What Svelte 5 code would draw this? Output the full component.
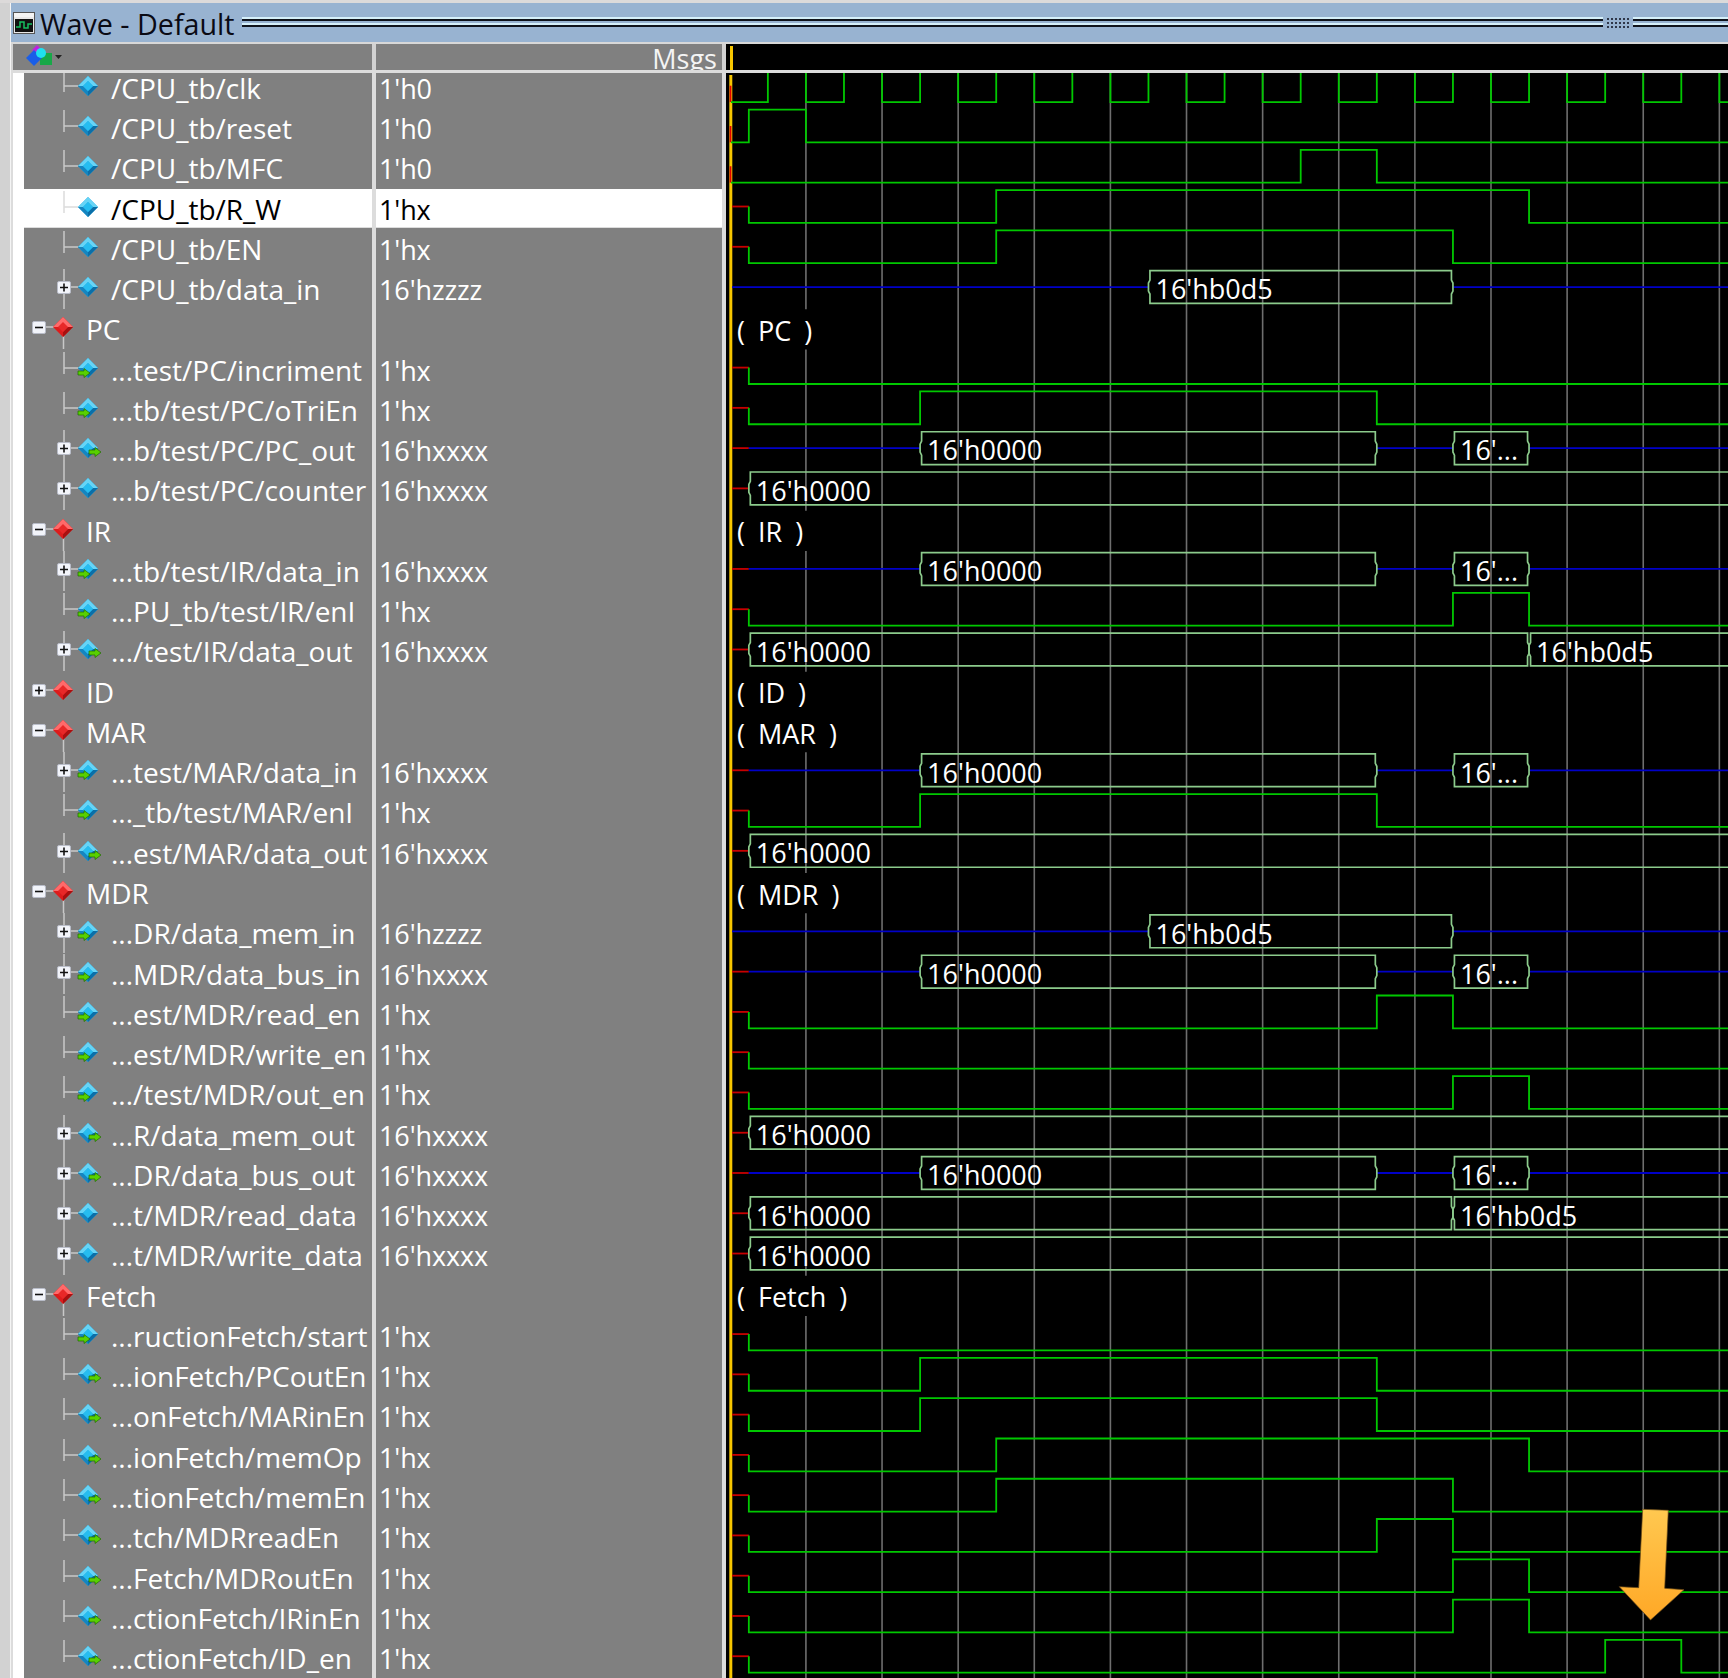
<script>
  // geometry of the wave view, in page pixels
  const rowTop = 67.7;
  const rowH = 40.27;
  const x = (t) => 729.8 + 38.06 * t;
  const END = 27;

  const top = (i) => rowTop + rowH * i;
  const hi = (i) => top(i) + 1.6;
  const lo = (i) => top(i) + 34.4;
  const mid = (i) => top(i) + 18;

  const bit = (value, ...edges) => ({ value, wave: 'bit', edges, known: value === "1'h0" });
  const val = (segs, z = false) => ({ value: z ? "16'hzzzz" : "16'hxxxx", wave: 'bus', segs, z });
  const group = (name, open = true) => ({ name, group: true, open, wave: 'group' });

  const b0000 = "16'h0000";
  const bd5 = "16'hb0d5";
  const pulses = [[5, 17, b0000], [19, 21, "16'..."]];
  const whole = [[0.5, END, b0000]];
  const zbus = [[11, 19, bd5]];

  const clock = [];
  for (let t = 1; t <= END; t++) clock.push(t);

  const rows = [
    { name: '/CPU_tb/clk', ...bit("1'h0", ...clock) },
    { name: '/CPU_tb/reset', ...bit("1'h0", 0.5, 2) },
    { name: '/CPU_tb/MFC', ...bit("1'h0", 15, 17) },
    { name: '/CPU_tb/R_W', ...bit("1'hx", 7, 21), selected: true },
    { name: '/CPU_tb/EN', ...bit("1'hx", 7, 19) },
    { name: '/CPU_tb/data_in', ...val(zbus, true), expand: true },
    group('PC'),
    { name: '...test/PC/incriment', ...bit("1'hx"), dir: 'in' },
    { name: '...tb/test/PC/oTriEn', ...bit("1'hx", 5, 17), dir: 'in' },
    { name: '...b/test/PC/PC_out', ...val(pulses), expand: true, dir: 'out' },
    { name: '...b/test/PC/counter', ...val(whole), expand: true },
    group('IR'),
    { name: '...tb/test/IR/data_in', ...val(pulses), expand: true, dir: 'in' },
    { name: '...PU_tb/test/IR/enI', ...bit("1'hx", 19, 21), dir: 'in' },
    { name: '.../test/IR/data_out', ...val([[0.5, 21, b0000], [21, END, bd5]]), expand: true, dir: 'out' },
    group('ID', false),
    group('MAR'),
    { name: '...test/MAR/data_in', ...val(pulses), expand: true, dir: 'in' },
    { name: '..._tb/test/MAR/enI', ...bit("1'hx", 5, 17), dir: 'in' },
    { name: '...est/MAR/data_out', ...val(whole), expand: true, dir: 'out' },
    group('MDR'),
    { name: '...DR/data_mem_in', ...val(zbus, true), expand: true, dir: 'in' },
    { name: '...MDR/data_bus_in', ...val(pulses), expand: true, dir: 'in' },
    { name: '...est/MDR/read_en', ...bit("1'hx", 17, 19), dir: 'in' },
    { name: '...est/MDR/write_en', ...bit("1'hx"), dir: 'in' },
    { name: '.../test/MDR/out_en', ...bit("1'hx", 19, 21), dir: 'in' },
    { name: '...R/data_mem_out', ...val(whole), expand: true, dir: 'out' },
    { name: '...DR/data_bus_out', ...val(pulses), expand: true, dir: 'out' },
    { name: '...t/MDR/read_data', ...val([[0.5, 19, b0000], [19, END, bd5]]), expand: true },
    { name: '...t/MDR/write_data', ...val(whole), expand: true },
    group('Fetch'),
    { name: '...ructionFetch/start', ...bit("1'hx"), dir: 'in' },
    { name: '...ionFetch/PCoutEn', ...bit("1'hx", 5, 17), dir: 'out' },
    { name: '...onFetch/MARinEn', ...bit("1'hx", 5, 17), dir: 'out' },
    { name: '...ionFetch/memOp', ...bit("1'hx", 7, 21), dir: 'out' },
    { name: '...tionFetch/memEn', ...bit("1'hx", 7, 19), dir: 'out' },
    { name: '...tch/MDRreadEn', ...bit("1'hx", 17, 19), dir: 'out' },
    { name: '...Fetch/MDRoutEn', ...bit("1'hx", 19, 21), dir: 'out' },
    { name: '...ctionFetch/IRinEn', ...bit("1'hx", 19, 21), dir: 'out' },
    { name: '...ctionFetch/ID_en', ...bit("1'hx", 23, 25), dir: 'out' }
  ];

  const gridTimes = [4, 6, 8, 10, 12, 14, 16, 18, 20, 22, 24, 26];
  const groupRows = rows.map((r, i) => (r.group ? i : -1)).filter((i) => i >= 0);

  // the first grid line is hidden behind the group captions
  function firstGridSpans() {
    const spans = [];
    let from = 73;
    for (const g of groupRows) {
      spans.push([from, top(g)]);
      from = top(g + 1);
    }
    spans.push([from, 1678]);
    return spans;
  }

  function bitPath(row, i) {
    let level = lo(i);
    const start = row.known ? 731 : x(0.5);
    let d = row.known ? `M${start} ${level}` : `M${start} ${mid(i)}V${level}`;
    for (const t of row.edges) {
      level = level === lo(i) ? hi(i) : lo(i);
      d += `H${x(t)}V${level}`;
    }
    return d + 'H1728';
  }

  function busPath(from, to, i) {
    const a = x(from);
    const b = to >= END ? 1740 : x(to);
    const m = mid(i);
    const t = hi(i);
    const u = lo(i);
    return (
      `M${a + 1.5} ${m - 7}V${t}H${b - 1.5}V${m - 7}L${b} ${m - 4}V${m + 4}L${b - 1.5} ${m + 7}V${u}H${a + 1.5}` +
      `V${m + 7}L${a} ${m + 4}V${m - 4}Z`
    );
  }

  function zPath(row, i) {
    const y = mid(i);
    let cur = row.z ? 732 : x(0.5);
    let d = '';
    for (const [a, b] of row.segs) {
      if (x(a) > cur + 1) d += `M${cur} ${y}H${x(a)}`;
      cur = b >= END ? 1740 : x(b);
    }
    if (cur < 1728) d += `M${cur} ${y}H1728`;
    return d;
  }
</script>

<div class="page">
  <div class="strip"></div>
  <div class="window">
    <div class="titlebar">
      <svg class="winicon" viewBox="0 0 22 22" width="22" height="22">
        <rect x="0.5" y="0.5" width="21" height="21" fill="#e8e8e8" stroke="#555" />
        <rect x="1" y="1" width="20" height="4" fill="#f4f4f4" />
        <rect x="2" y="7" width="18" height="13" fill="#111" />
        <path d="M3 15H7V10H11V16H15V12H19" fill="none" stroke="#16c060" stroke-width="1.5" />
      </svg>
      <span class="title">Wave - Default</span>
      <div class="grip long"></div>
      <div class="dots"></div>
      <div class="grip"></div>
    </div>

    <div class="head">
      <div class="head-name">
        <svg viewBox="0 0 40 24" width="40" height="24">
          <path d="M9 6L14 1L19 6L14 11Z" fill="#c020e0" />
          <rect x="17" y="9" width="12" height="12" fill="#18a848" />
          <path d="M3 14L11 6L19 14L11 22Z" fill="#1a5ee8" />
          <circle cx="18" cy="9" r="5" fill="#20e0f0" />
          <path d="M32 11H39L35.5 15Z" fill="#222" />
        </svg>
      </div>
      <div class="head-value"><span>Msgs</span></div>
      <div class="head-wave"></div>
    </div>

    <div class="body">
      <div class="list">
        <div class="list-inner">
          {#each rows as row}
            <div class="row" class:selected={row.selected}>
              <div class="name-cell">
                <svg class="tree" viewBox="24 0 78 40" width="78" height="40">
                  {#if row.group}
                    <path d="M39 18H54" stroke="#c8c8c8" stroke-width="1.5" />
                    {#if row.open}<path d="M63.5 20V40" stroke="#c8c8c8" stroke-width="1.5" />{/if}
                    <rect x="32.5" y="12.5" width="13" height="12" rx="1.5" fill="#f2f4fa" stroke="#b8bcc8" />
                    <path d="M35 18.5H43" stroke="#111" stroke-width="1.6" />
                    {#if !row.open}<path d="M39 14.5V22.5" stroke="#111" stroke-width="1.6" />{/if}
                    <path d="M63 8L73 18L63 28L53 18Z" fill="#dd1c1c" />
                    <path d="M63 8L73 18H53Z" fill="#ff6a6a" />
                    <path d="M63 28L73 18L68 18L63 23Z" fill="#a81010" />
                    <path d="M63 13L68 18L63 23L58 18Z" fill="#e82828" />
                  {:else}
                    {#if row.expand}
                      <path d="M64 0V40" stroke="#c8c8c8" stroke-width="1.5" />
                      <path d="M64 18H78" stroke="#c8c8c8" stroke-width="1.5" />
                      <rect x="57.5" y="12.5" width="13" height="12" rx="1.5" fill="#f2f4fa" stroke="#b8bcc8" />
                      <path d="M60 18.5H68M64 14.5V22.5" stroke="#111" stroke-width="1.6" />
                    {:else}
                      <path d="M64 2V24M64 18H78" fill="none" stroke={row.selected ? '#dcdcdc' : '#c8c8c8'} stroke-width="1.5" />
                    {/if}
                    <path d="M88 8L98 18L88 28L78 18Z" fill="#1fa6e0" />
                    <path d="M88 8L98 18L93 18L88 13L83 18L78 18Z" fill="#66d4f6" />
                    <path d="M98 18L88 28L88 23L93 18Z" fill="#0b6fa8" />
                    <path d="M78 18L88 28L88 23L83 18Z" fill="#1585c0" />
                    <path d="M88 13L93 18L88 23L83 18Z" fill="#26bdf0" />
                    {#if row.dir === 'in'}
                      <path d="M78 21H84V18.5L90 23L84 27.5V25H78Z" fill="#58d000" stroke="#1e6a00" stroke-width="0.7" />
                    {:else if row.dir === 'out'}
                      <path d="M89 20H95V17.5L101 22L95 26.5V24H89Z" fill="#58d000" stroke="#1e6a00" stroke-width="0.7" />
                    {/if}
                  {/if}
                </svg>
                <span class="label" class:grouplabel={row.group}>{row.name}</span>
              </div>
              <div class="value-cell">{row.value ?? ''}</div>
            </div>
          {/each}
        </div>
      </div>

      <svg class="waves" viewBox="726 73 1002 1605" width="1002" height="1605">
        <defs>
          <linearGradient id="arrowFill" x1="0" y1="0" x2="0" y2="1">
            <stop offset="0" stop-color="#ffc850" />
            <stop offset="1" stop-color="#ffa826" />
          </linearGradient>
        </defs>
        <rect x="726" y="73" width="1002" height="1605" fill="#000" />

        {#each firstGridSpans() as [a, b]}
          <path d="M{x(2)} {a}V{b}" stroke="#6e6e6e" stroke-width="1.6" />
        {/each}
        {#each gridTimes as t}
          <path d="M{x(t)} 73V1678" stroke="#6e6e6e" stroke-width="1.6" />
        {/each}

        <path d="M730.8 75V1678" stroke="#f7c600" stroke-width="3" />

        {#each rows as row, i}
          {#if row.wave === 'group'}
            <text class="wtext caption" x="737" y={top(i) + 31.5}>( {row.name} )</text>
          {:else if row.wave === 'bit'}
            {#if row.known}
              <path d="M730.5 {mid(i)}V{lo(i)}" stroke="#e00000" stroke-width="1.8" />
            {:else}
              <path d="M732 {mid(i)}H{x(0.5)}" stroke="#c80000" stroke-width="1.8" />
            {/if}
            <path d={bitPath(row, i)} class="green" />
          {:else}
            {#if !row.z}
              <path d="M732 {mid(i)}H{x(0.5)}" stroke="#c80000" stroke-width="1.8" />
            {/if}
            <path d={zPath(row, i)} stroke="#0000c8" stroke-width="1.8" />
            {#each row.segs as [a, b, label]}
              <path d={busPath(a, b, i)} class="bus" />
              <text class="wtext" x={x(a) + 7} y={top(i) + 30.3}>{label}</text>
            {/each}
          {/if}
        {/each}

        <path
          d="M1642.7 1509.3L1668.3 1510.3L1664.7 1588.3L1684 1589.7L1650.5 1620L1619.3 1586.7L1638.7 1587.7Z"
          fill="url(#arrowFill)"
          stroke="#6a4a18"
          stroke-width="0.7"
        />
      </svg>
    </div>
  </div>
</div>

<style>
  :global(body) {
    margin: 0;
    background: #d0d0d0;
  }

  .page {
    width: 1728px;
    height: 1678px;
    overflow: hidden;
    background: #d2d2d2;
    font-family: 'Open Sans', 'Liberation Sans', sans-serif;
  }

  .strip {
    height: 3px;
    background: #dcdada;
  }

  .window {
    margin-left: 10px;
    border-left: 1px solid #f4f4f4;
    height: 1675px;
    display: flex;
    flex-direction: column;
  }

  .titlebar {
    background: #98b3d1;
    border-bottom: 2px solid #d8d8d8;
    display: flex;
    align-items: center;
    padding-left: 2px;
    box-sizing: border-box;
    height: 41px;
  }

  .winicon {
    flex: none;
    margin-right: 5px;
  }

  .title {
    flex: none;
    width: 202px;
    font-size: 28.7px;
    color: #0a0a14;
    white-space: nowrap;
    line-height: 38px;
    margin-top: 2px;
  }

  .grip {
    flex: 1;
    height: 12px;
    background: linear-gradient(
      #d6f0fa 0 2px,
      #10141c 2px 4px,
      #98b3d1 4px 6px,
      #d6f0fa 6px 8px,
      #10141c 8px 10px,
      #98b3d1 10px 12px
    );
  }

  .grip.long {
    flex: none;
    width: 1361px;
  }

  .dots {
    flex: none;
    width: 24px;
    height: 12px;
    margin: 0 3px;
    background: radial-gradient(circle, #30384a 1px, transparent 1.4px) 0 0 / 4px 4px;
  }

  .head {
    flex: none;
    height: 29px;
    display: flex;
    box-sizing: border-box;
    border-bottom: 3px solid #dcdcdc;
  }

  .head-name {
    width: 359px;
    margin-left: 2px;
    background: #808080;
    padding-left: 10px;
    box-sizing: border-box;
  }

  .head-name svg {
    display: block;
  }

  .head-value {
    width: 346px;
    margin-left: 4px;
    background: #808080;
    color: #f4f4f4;
    font-size: 27px;
    line-height: 36px;
    text-align: right;
    padding-right: 5px;
    box-sizing: border-box;
    overflow: hidden;
  }

  .head-value span {
    display: block;
    margin-top: -3px;
  }

  .head-wave {
    flex: 1;
    margin-left: 4px;
    background: #000;
    position: relative;
  }

  .head-wave::before {
    content: '';
    position: absolute;
    left: 3.5px;
    top: 2px;
    bottom: 0;
    width: 3px;
    background: #f7c600;
  }

  .body {
    flex: 1;
    display: flex;
    min-height: 0;
    background: #dcdcdc;
  }

  .list {
    flex: none;
    width: 713px;
    margin-left: 2px;
    padding-left: 11px;
    box-sizing: border-box;
    background: linear-gradient(90deg, #fff 0 11px, transparent 11px);
    overflow: hidden;
    height: 1605px;
  }

  .list-inner {
    margin-top: -5.3px;
  }

  .row {
    width: 698px;
    height: 40.27px;
    display: flex;
    color: #fff;
    font-size: 27px;
    background: linear-gradient(90deg, #808080 0 348px, #dcdcdc 348px 352px, #808080 352px);
  }

  .row.selected {
    color: #000;
  }

  .row.selected .value-cell,
  .row.selected .name-cell {
    background: linear-gradient(#fff 0 37.6px, #dcdcdc 37.6px 38.6px, transparent 38.6px);
  }

  .name-cell {
    flex: none;
    width: 348px;
    display: flex;
    align-items: flex-start;
    white-space: nowrap;
    overflow: hidden;
  }

  .tree {
    flex: none;
    display: block;
  }

  .label {
    font-size: 28px;
    line-height: 41px;
    margin-left: 9px;
  }

  .label.grouplabel {
    margin-left: -16px;
  }

  .value-cell {
    width: 346px;
    margin-left: 4px;
    padding-left: 3px;
    box-sizing: border-box;
    line-height: 41px;
    white-space: nowrap;
    letter-spacing: -0.1px;
  }

  .waves {
    flex: none;
    display: block;
  }

  .green {
    fill: none;
    stroke: #00c800;
    stroke-width: 1.8;
  }

  .bus {
    fill: none;
    stroke: #8ccb8c;
    stroke-width: 1.7;
  }

  .wtext {
    fill: #fff;
    font-size: 27px;
    font-family: 'Open Sans', 'Liberation Sans', sans-serif;
  }

  .caption {
    word-spacing: 6px;
  }
</style>
